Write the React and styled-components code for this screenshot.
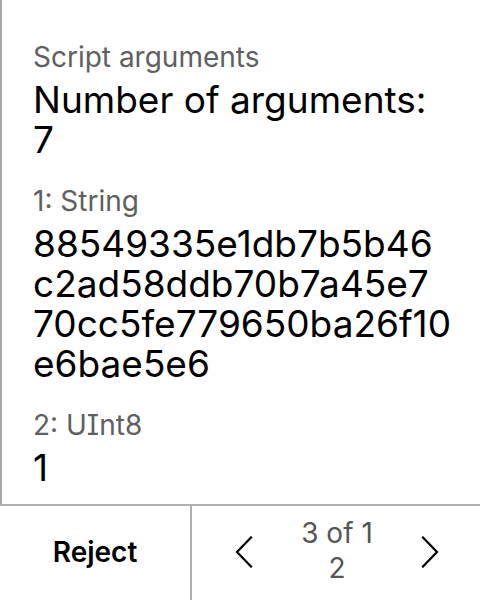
import React from 'react'
import styled, { createGlobalStyle } from 'styled-components'

const GlobalStyle = createGlobalStyle`
    html, body {
        margin: 0;
        padding: 0;
        background: #ffffff;
    }

    body {
        font-family: Inter, "Noto Sans", sans-serif;
        font-feature-settings: "cv08";
    }
`

const Screen = styled.div`
    width: 480px;
    height: 600px;
    display: flex;
    flex-direction: column;
    background: #ffffff;
    overflow: hidden;
`

const Content = styled.div`
    flex: 1;
    display: flex;
    flex-direction: column;
    gap: 24px;
    padding: 40px 31px 0 31px;
    border-left: 2px solid #a8a8a8;
    box-sizing: border-box;
`

const Field = styled.div`
    display: flex;
    flex-direction: column;
    gap: 6px;
`

const Label = styled.div`
    font-size: 28px;
    line-height: 34px;
    color: #5f5f5f;
`

const Value = styled.div`
    font-size: 37px;
    line-height: 40px;
    font-weight: 400;
    color: #000000;
`

const HexLine = styled.span`
    display: block;
    white-space: nowrap;
`

const Footer = styled.div`
    height: 96px;
    flex-shrink: 0;
    display: grid;
    grid-template-columns: 192px 1fr;
    border-top: 2px solid #b0b0b0;
    box-sizing: border-box;
`

const RejectButton = styled.button`
    border: none;
    border-right: 2px solid #b0b0b0;
    background: none;
    font-family: Inter, "Noto Sans", sans-serif;
    font-size: 28px;
    font-weight: 600;
    color: #000000;
    padding: 0 0 2px 0;
    cursor: pointer;
`

const Pager = styled.div`
    display: flex;
    align-items: center;
    justify-content: space-between;
    padding: 0 38px 2px 40px;
`

const Arrow = styled.button`
    border: none;
    background: none;
    padding: 0;
    width: 24px;
    height: 36px;
    display: flex;
    align-items: center;
    justify-content: center;
    cursor: pointer;
`

const PageText = styled.div`
    width: 80px;
    font-size: 28px;
    line-height: 35px;
    color: #555555;
    text-align: center;
    word-break: break-all;
    margin-bottom: 2px;
`

const Chevron = ({ dir }) => (
    <svg width="20" height="32" viewBox="0 0 20 32" fill="none">
        <path
            d={dir === 'left' ? 'M17 1.5 L3 16 L17 30.5' : 'M3 1.5 L17 16 L3 30.5'}
            stroke="#000"
            strokeWidth="2.2"
            strokeLinecap="square"
        />
    </svg>
)

// the device splits long hex values into fixed screen lines
const args = [
    { label: 'Script arguments', value: 'Number of arguments: 7' },
    {
        label: '1: String',
        lines: ['88549335e1db7b5b46', 'c2ad58ddb70b7a45e7', '70cc5fe779650ba26f10', 'e6bae5e6'],
    },
    { label: '2: UInt8', value: '1' },
]

const App = () => (
    <>
        <GlobalStyle />
        <Screen>
            <Content>
                {args.map(a => (
                    <Field key={a.label}>
                        <Label>{a.label}</Label>
                        <Value>
                            {a.lines ? a.lines.map(l => <HexLine key={l}>{l}</HexLine>) : a.value}
                        </Value>
                    </Field>
                ))}
            </Content>
            <Footer>
                <RejectButton type="button">Reject</RejectButton>
                <Pager>
                    <Arrow type="button"><Chevron dir="left" /></Arrow>
                    <PageText>3 of 12</PageText>
                    <Arrow type="button"><Chevron dir="right" /></Arrow>
                </Pager>
            </Footer>
        </Screen>
    </>
)

export default App
